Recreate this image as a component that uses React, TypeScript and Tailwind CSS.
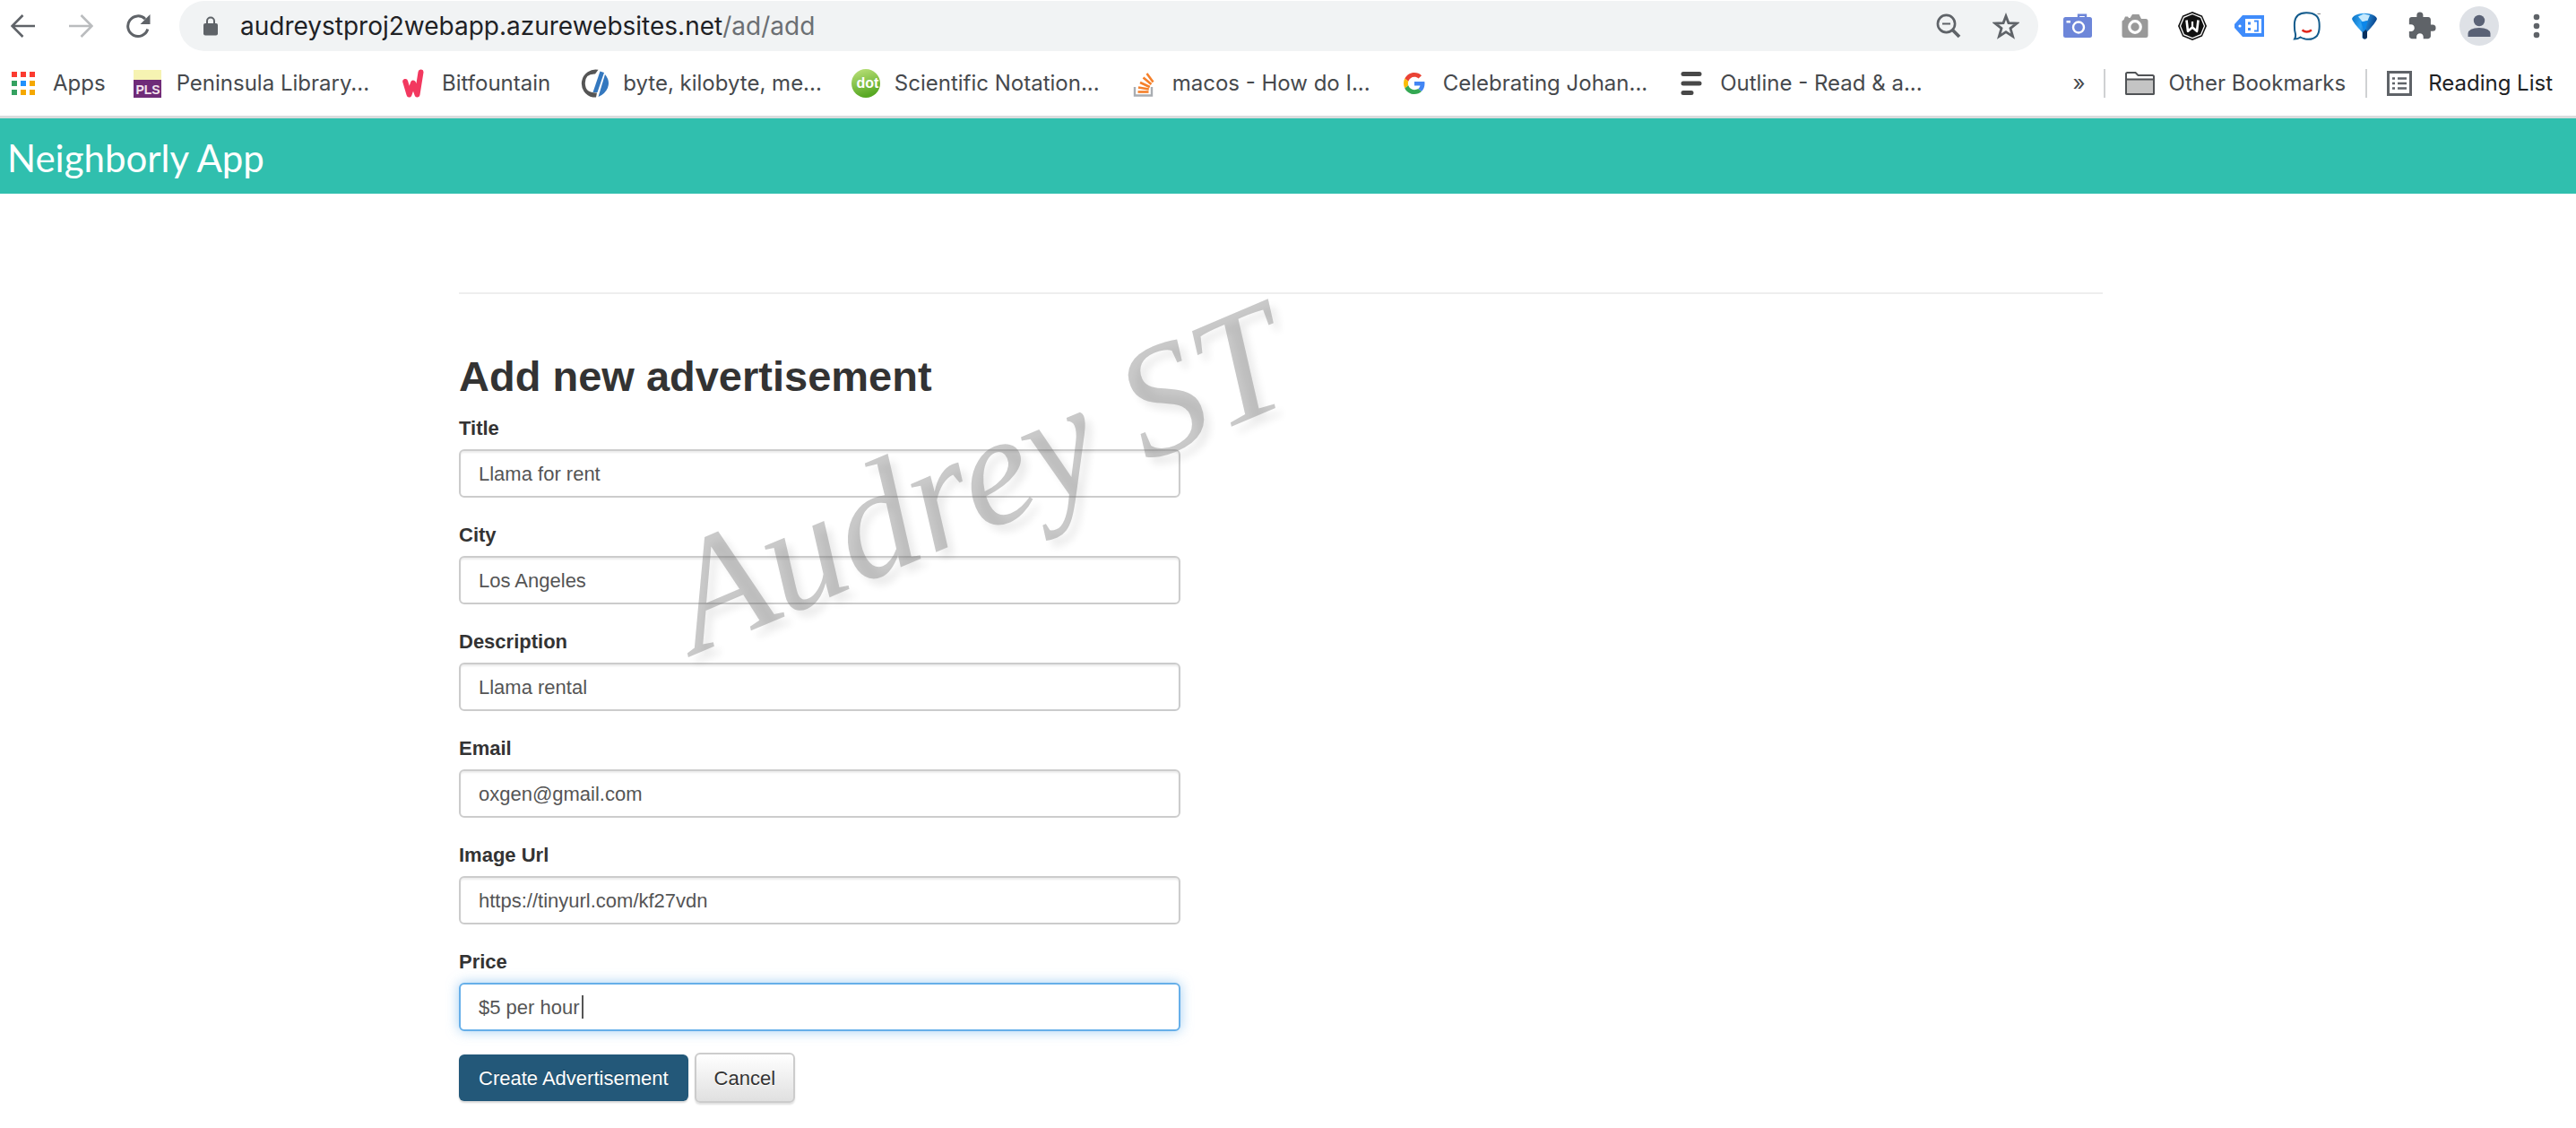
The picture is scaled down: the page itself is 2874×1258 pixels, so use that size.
import React, { useState } from "react";

/* ---------- Browser toolbar icons ---------- */

function ArrowIcon({ className, flip }: { className: string; flip?: boolean }) {
  return (
    <svg viewBox="0 0 28 28" className={className} fill="none" stroke="currentColor" strokeWidth="2.6">
      {flip ? <path d="M1 14H26M14.5 2L26.5 14L14.5 26" /> : <path d="M27 14H2M13.5 2L1.5 14L13.5 26" />}
    </svg>
  );
}

function ReloadIcon() {
  return (
    <svg viewBox="0 0 28 28" className="size-7 text-[#5f6368]" fill="none" stroke="currentColor" strokeWidth="3">
      <path d="M24.8 17.5A11.3 11.3 0 1 1 22 6.2" />
      <path d="M27.5 1V12H16.5Z" fill="currentColor" stroke="none" />
    </svg>
  );
}

function LockIcon() {
  return (
    <svg viewBox="0 0 18 22" className="h-[22px] w-[18px]" fill="none">
      <rect x="1" y="8" width="16" height="13.5" rx="2" fill="#5f6368" />
      <path d="M5 9V5.5a4 4 0 0 1 8 0V9" stroke="#5f6368" strokeWidth="2" />
    </svg>
  );
}

function ZoomOutIcon() {
  return (
    <svg viewBox="0 0 28 28" className="size-7" fill="none" stroke="#5f6368" strokeWidth="2.6">
      <circle cx="11.5" cy="11.5" r="9.6" />
      <path d="M7 11.5H16" strokeWidth="2" />
      <path d="M18 18L26 26" strokeWidth="3.8" />
    </svg>
  );
}

function StarIcon() {
  return (
    <svg viewBox="0 0 30 30" className="size-[30px]" fill="none" stroke="#5f6368" strokeWidth="2.8">
      <path d="M15 4L17.9 11.6L27 12L20 17.6L22.6 26.6L15 21.6L7.4 26.6L10 17.6L3 12L12.1 11.6Z" />
    </svg>
  );
}

function BlueCameraIcon() {
  return (
    <svg viewBox="0 0 32 28" className="h-7 w-8" fill="none">
      <path d="M17 6V1.800H25V6" stroke="#6d86d9" strokeWidth="2.400" />
      <rect y="4" width="32" height="23" rx="2.500" fill="#6d86d9" />
      <rect x="3.500" y="8" width="4.500" height="2.500" fill="#fff" />
      <circle cx="17" cy="15.500" r="6" stroke="#fff" strokeWidth="2.400" />
    </svg>
  );
}

function GreyCameraIcon() {
  return (
    <svg viewBox="0 0 30 28" className="h-7 w-[30px]">
      <path d="M2.500 7L4 3.500H7L8 5H9.500L12 1H19.500L22 6H27A2.500 2.500 0 0 1 29.500 8.500V24.500A2.500 2.500 0 0 1 27 27H3A2.500 2.500 0 0 1 .5 24.500V8.500Z" fill="#999" />
      <circle cx="15" cy="15" r="6.300" fill="#999" stroke="#fff" strokeWidth="3.200" />
    </svg>
  );
}

function OctagonIcon() {
  return (
    <svg viewBox="0 0 32 32" className="size-8">
      <path d="M16 0L27 4.500L32 16L27 27.500L16 32L5 27.500L0 16L5 4.500Z" fill="#111" />
      <path d="M16 2.500L25.500 6.300L29.500 16L25.500 25.700L16 29.500L6.500 25.700L2.500 16L6.500 6.300Z" fill="none" stroke="#fff" strokeWidth="1.300" />
      <path d="M9.500 9.500L11 21.800L16 17.500L21 21.800L22.500 9.500" fill="none" stroke="#fff" strokeWidth="2.600" strokeLinejoin="round" />
      <path d="M16 11V17" stroke="#fff" strokeWidth="2.200" />
    </svg>
  );
}

function TagIcon() {
  return (
    <svg viewBox="0 0 34 24" className="h-6 w-[34px]">
      <path d="M9 0H33V24H9L0 14V10Z" fill="#3f8cfb" />
      <circle cx="6" cy="12" r="1.600" fill="#fff" />
      <rect x="12" y="4" width="18" height="16" fill="#fff" />
      <path d="M15 7.500h3v3h-3zM15 14h3v3h-3z" fill="#3f8cfb" />
      <path d="M22 6.500H26V17.500H22" fill="none" stroke="#3f8cfb" strokeWidth="1.800" />
    </svg>
  );
}

function GhostIcon() {
  return (
    <svg viewBox="0 0 32 32" className="size-8" fill="none">
      <path d="M2 30.500Q3.500 28 3 25Q1.500 20 2 12Q3 1.500 15 1.200Q28.500 1 29.500 12Q30.500 22 27 27Q22 32 14 30.500Q10 29.500 8.500 28.500Q5.500 30.500 2 30.500Z" stroke="#125b8c" strokeWidth="2" />
      <path d="M10.500 20.500Q15.500 24.500 21 20.500" stroke="#e0261b" strokeWidth="2.400" />
      <path d="M27.500 2.500H31" stroke="#888" />
    </svg>
  );
}

function GemIcon() {
  return (
    <svg viewBox="0 0 28 30" className="h-[30px] w-7">
      <defs>
        <linearGradient id="gem" x1="0" y1="0" x2="1" y2="0.300">
          <stop offset="0" stopColor="#0a6fc0" />
          <stop offset="0.450" stopColor="#2fa4f5" />
          <stop offset="1" stopColor="#073f86" />
        </linearGradient>
      </defs>
      <path d="M0 7Q1 3 8 1.500Q14 .2 20 1.500Q27 3 28 7Q27 11 16.500 22V28Q14 31 11.500 28V22Q1 11 0 7Z" fill="url(#gem)" />
      <path d="M7 4.500L13 1.500L20 3L17.500 9L12 10.500Z" fill="#c6e9fd" />
      <path d="M10 10.500L17.500 9L15 20L14 22Z" fill="#0b87ea" />
      <path d="M15.500 19L17 21V28Q14.500 31 12 28V22Z" fill="#07305f" />
    </svg>
  );
}

function PuzzleIcon() {
  return (
    <svg viewBox="0 0 24 24" className="size-[34px]" fill="#5f6368">
      <path d="M20.500 11H19V7c0-1.100-.9-2-2-2h-4V3.500a2.500 2.500 0 0 0-5 0V5H4c-1.100 0-1.990.9-1.990 2v3.800H3.500c1.490 0 2.700 1.210 2.700 2.700s-1.210 2.700-2.700 2.700H2V20c0 1.100.9 2 2 2h3.800v-1.500c0-1.490 1.210-2.700 2.700-2.700s2.700 1.210 2.700 2.700V22H17c1.100 0 2-.9 2-2v-4h1.500a2.500 2.500 0 0 0 0-5z" />
    </svg>
  );
}

function AvatarIcon() {
  return (
    <svg viewBox="0 0 44 44" className="size-11">
      <circle cx="22" cy="22" r="22" fill="#dee1e6" />
      <circle cx="22" cy="16" r="6.200" fill="#5a6276" />
      <path d="M9.500 34V30.500Q10 24 22 24T34.500 30.500V34Z" fill="#5a6276" />
    </svg>
  );
}

function DotsIcon() {
  return (
    <svg viewBox="0 0 8 28" className="h-7 w-2" fill="#5f6368">
      <circle cx="4" cy="4" r="3.300" />
      <circle cx="4" cy="14" r="3.300" />
      <circle cx="4" cy="24" r="3.300" />
    </svg>
  );
}

/* ---------- Bookmark icons ---------- */

function AppsIcon() {
  const colors = ["#fb3b30", "#fb3b30", "#fb3b30", "#34a160", "#2190fc", "#f5a800", "#34a160", "#f5a800", "#f5a800"];
  return (
    <svg viewBox="0 0 26 26" className="size-[26px]">
      {colors.map((c, i) => (
        <rect key={i} x={(i % 3) * 10} y={Math.floor(i / 3) * 10} width="6" height="6" fill={c} />
      ))}
    </svg>
  );
}

function LibraryIcon() {
  return (
    <svg viewBox="0 0 31 31" className="size-[31px]">
      <rect width="31" height="12" fill="#f6f3b2" />
      <rect y="11" width="31" height="20" fill="#6f2b78" />
      <text x="16" y="27" textAnchor="middle" fontSize="14" fontWeight="700" fontFamily="Liberation Sans, sans-serif" fill="#f3e3ee">
        PLS
      </text>
    </svg>
  );
}

function BitfountainIcon() {
  return (
    <svg viewBox="0 0 24 32" className="h-8 w-6" fill="none" stroke="#f2385f" strokeWidth="6" strokeLinecap="round" strokeLinejoin="round">
      <path d="M3.200 14L7.500 28.500L12 15.500L16.500 28.500L20.500 3.500" />
    </svg>
  );
}

function ConceptIcon() {
  return (
    <svg viewBox="0 0 32 32" className="size-8">
      <path d="M20.500 .8A15.500 15.500 0 1 0 14.500 31.500L18 31.500L19 26.500Q6 27 5.800 16T17 5.500Z" fill="#555" />
      <path d="M22.500 2.500L27 4L19.500 26H14.500Z" fill="#3478bf" />
      <path d="M28 6Q34 13 31 21Q28 28 20.500 31Z" fill="#3478bf" />
    </svg>
  );
}

function DotIcon() {
  return (
    <svg viewBox="0 0 32 32" className="size-8">
      <defs>
        <linearGradient id="dot" x1="0" y1="0" x2="0.300" y2="1">
          <stop offset="0" stopColor="#bfe37c" />
          <stop offset="1" stopColor="#57a823" />
        </linearGradient>
      </defs>
      <circle cx="16" cy="16" r="16" fill="url(#dot)" />
      <text x="18" y="21" textAnchor="middle" fontSize="16" fontWeight="700" fontFamily="Liberation Sans, sans-serif" fill="#fff">
        dot
      </text>
    </svg>
  );
}

function StackIcon() {
  return (
    <svg viewBox="0 0 32 32" className="size-8" fill="none">
      <path d="M6 20V29.500H25V20" stroke="#a9adb2" strokeWidth="2.400" />
      <g stroke="#f5802a" strokeWidth="2.600">
        <path d="M9.500 25.500H21.500" />
        <path d="M10 20.500L21.800 22.500" />
        <path d="M12 15L22.800 20" />
        <path d="M15.500 9.500L24.500 17" />
        <path d="M19.500 5L26.500 14.500" />
      </g>
    </svg>
  );
}

function GoogleIcon() {
  return (
    <svg viewBox="0 0 48 48" className="size-6">
      <path fill="#EA4335" d="M24 9.500c3.540 0 6.710 1.220 9.210 3.600l6.850-6.850C35.900 2.380 30.470 0 24 0 14.620 0 6.510 5.380 2.560 13.220l7.980 6.190C12.430 13.720 17.740 9.500 24 9.500z" />
      <path fill="#4285F4" d="M46.980 24.550c0-1.570-.15-3.090-.38-4.550H24v9.020h12.940c-.58 2.960-2.260 5.480-4.780 7.180l7.730 6c4.510-4.180 7.090-10.360 7.090-17.650z" />
      <path fill="#FBBC05" d="M10.530 28.590c-.48-1.450-.76-2.990-.76-4.590s.27-3.140.76-4.590l-7.980-6.190C.92 16.460 0 20.120 0 24c0 3.880.92 7.540 2.560 10.780l7.970-6.190z" />
      <path fill="#34A853" d="M24 48c6.480 0 11.930-2.130 15.890-5.810l-7.730-6c-2.150 1.450-4.920 2.300-8.160 2.300-6.260 0-11.570-4.220-13.470-9.910l-7.980 6.190C6.510 42.620 14.620 48 24 48z" />
    </svg>
  );
}

function OutlineIcon() {
  return (
    <svg viewBox="0 0 24 28" className="h-7 w-6" stroke="#484848" strokeWidth="5" strokeLinecap="round">
      <path d="M3 3.500H21M3 14H21M3 24.500H12" />
    </svg>
  );
}

function FolderIcon() {
  return (
    <svg viewBox="0 0 33 26" className="h-[26px] w-[33px]" stroke="#505356" strokeWidth="2">
      <path d="M1 24V2.500Q1 1 2.500 1H11.500L14.500 4H30.500Q32 4 32 5.500V24Q32 25 31 25H2Q1 25 1 24Z" fill="#fff" />
      <path d="M1 8.500H32V24Q32 25 31 25H2Q1 25 1 24Z" fill="#c4c4c4" />
    </svg>
  );
}

function ReadingListIcon() {
  return (
    <svg viewBox="0 0 28 28" className="size-7" fill="none" stroke="#5f6368">
      <rect x="1.500" y="1.500" width="25" height="25" strokeWidth="3" />
      <path d="M6 8.500H9M6 14H9M6 19.500H9M12 8.500H22M12 14H22M12 19.500H22" strokeWidth="2.400" />
    </svg>
  );
}

const extensions = [
  { label: "Screenshot", icon: <BlueCameraIcon /> },
  { label: "Camera", icon: <GreyCameraIcon /> },
  { label: "W extension", icon: <OctagonIcon /> },
  { label: "Tag extension", icon: <TagIcon /> },
  { label: "Ghost extension", icon: <GhostIcon /> },
  { label: "Gem extension", icon: <GemIcon /> },
  { label: "Extensions", icon: <PuzzleIcon /> },
  { label: "Profile", icon: <AvatarIcon /> },
  { label: "Menu", icon: <DotsIcon /> },
];

const bookmarks = [
  { label: "Peninsula Library...", icon: <LibraryIcon /> },
  { label: "Bitfountain", icon: <BitfountainIcon /> },
  { label: "byte, kilobyte, me...", icon: <ConceptIcon /> },
  { label: "Scientific Notation...", icon: <DotIcon /> },
  { label: "macos - How do I...", icon: <StackIcon /> },
  { label: "Celebrating Johan...", icon: <GoogleIcon /> },
  { label: "Outline - Read & a...", icon: <OutlineIcon /> },
];

function BrowserChrome() {
  return (
    <div className="border-b-[3px] border-[#d9dcdd] bg-white pt-px font-['Inter',sans-serif]">
      <div className="flex h-14 items-center">
        <div className="flex items-center gap-9 pl-3">
          <button type="button" aria-label="Back"><ArrowIcon className="size-7 text-[#5f6368]" /></button>
          <button type="button" aria-label="Forward"><ArrowIcon flip className="size-7 text-[#babcbe]" /></button>
          <button type="button" aria-label="Reload"><ReloadIcon /></button>
        </div>
        <div className="ml-8 flex h-14 flex-1 items-center rounded-full bg-[#f1f3f4] pr-1 pl-[26px]">
          <LockIcon />
          <a href="#address" className="ml-6 flex-1 text-[28px] leading-8 whitespace-nowrap text-[#202124]">
            audreystproj2webapp.azurewebsites.net<span className="text-[#6b6f73]">/ad/add</span>
          </a>
          <button type="button" aria-label="Zoom" className="flex w-16 justify-center"><ZoomOutIcon /></button>
          <button type="button" aria-label="Bookmark" className="flex w-16 justify-center"><StarIcon /></button>
        </div>
        <div className="flex items-center px-3">
          {extensions.map((e) => (
            <button key={e.label} type="button" aria-label={e.label} className="flex w-16 justify-center">
              {e.icon}
            </button>
          ))}
        </div>
      </div>
      <nav className="flex h-[72px] items-center pr-[26px] pl-[13px] text-2xl whitespace-nowrap text-[#46494d]">
        <a href="#apps" className="flex items-center gap-5">
          <AppsIcon />
          Apps
        </a>
        <div className="flex flex-1 items-center gap-[33px] pl-[31px]">
          {bookmarks.map((b) => (
            <a key={b.label} href="#bookmark" className="flex items-center gap-4">
              <span className="flex w-8 justify-center">{b.icon}</span>
              {b.label}
            </a>
          ))}
        </div>
        <button type="button" className="pr-5">»</button>
        <a href="#other" className="flex h-8 items-center gap-4 border-l-2 border-[#cfd1d3] px-[22px]">
          <FolderIcon />
          Other Bookmarks
        </a>
        <a href="#reading" className="flex h-8 items-center gap-[18px] border-l-2 border-[#cfd1d3] pl-[22px] text-[#202124]">
          <ReadingListIcon />
          Reading List
        </a>
      </nav>
    </div>
  );
}

const initialFields = [
  { id: "title", label: "Title", value: "Llama for rent" },
  { id: "city", label: "City", value: "Los Angeles" },
  { id: "description", label: "Description", value: "Llama rental" },
  { id: "email", label: "Email", value: "oxgen@gmail.com" },
  { id: "image", label: "Image Url", value: "https://tinyurl.com/kf27vdn" },
  { id: "price", label: "Price", value: "$5 per hour" },
];

function AdvertisementForm() {
  const [fields, setFields] = useState(initialFields);
  const update = (id: string, value: string) =>
    setFields(fields.map((f) => (f.id === id ? { ...f, value } : f)));

  return (
    <form className="flex flex-col gap-6" onSubmit={(e) => e.preventDefault()}>
      {fields.map((f) => (
        <div key={f.id} className="max-w-[805px]">
          <label htmlFor={f.id} className="mb-[5px] block text-[22px] leading-9 font-bold text-[#333]">
            {f.label}
          </label>
          <div className="relative">
            <input
              id={f.id}
              value={f.value}
              onChange={(e) => update(f.id, e.target.value)}
              className={
                f.id === "price"
                  ? "block h-[54px] w-full rounded-md border-2 border-[#66afe9] bg-white px-5 pt-0.5 text-[22px] text-[#555] shadow-[0_0_14px_rgba(102,175,233,0.6)] outline-none"
                  : "block h-[54px] w-full rounded-md border-2 border-[#ccc] bg-white px-5 pt-0.5 text-[22px] text-[#555] shadow-[inset_0_2px_2px_rgba(0,0,0,0.075)] outline-none"
              }
            />
            {f.id === "price" && <span className="absolute top-3.5 left-[137px] h-[26px] w-0.5 bg-[#555]" />}
          </div>
        </div>
      ))}
      <div className="flex items-center gap-[7px] text-[22px]">
        <button
          type="submit"
          className="h-[52px] rounded-md bg-[#235879] px-[22px] text-white shadow-[0_2px_2px_rgba(0,0,0,0.15)] [text-shadow:0_-1px_0_rgba(0,0,0,0.3)]"
        >
          Create Advertisement
        </button>
        <button
          type="button"
          className="h-14 rounded-md border-2 border-[#ccc] bg-linear-to-b from-white to-[#e0e0e0] px-5 text-[#333] shadow-[0_2px_2px_rgba(0,0,0,0.12)] [text-shadow:0_1px_0_#fff]"
        >
          Cancel
        </button>
      </div>
    </form>
  );
}

export default function App() {
  return (
    <div className="min-h-screen bg-white">
      <BrowserChrome />
      <header className="flex h-[84px] items-center bg-[#30bfae] px-2">
        <a href="#home" className="pt-1 font-['Lato',sans-serif] text-[42px] leading-none text-white">
          Neighborly App
        </a>
      </header>
      <div className="pr-4">
        <main className="relative mx-auto max-w-[1834px] font-['Liberation_Sans',Arial,sans-serif]">
          <hr className="mt-[110px] border-t-2 border-[#eee]" />
          <h1 className="mt-[68px] mb-4 text-[47px] leading-[48px] font-bold text-[#333]">Add new advertisement</h1>
          <AdvertisementForm />
          <p className="pointer-events-none absolute top-[254px] left-[276px] origin-bottom-left -rotate-[23deg] font-['Monotype_Corsiva','Apple_Chancery','Z003','URW_Chancery_L','Liberation_Serif',serif] text-[176px] leading-none whitespace-nowrap text-[#787878]/40 italic [text-shadow:4px_10px_8px_rgba(0,0,0,0.08)]">
            Audrey ST
          </p>
        </main>
      </div>
    </div>
  );
}
